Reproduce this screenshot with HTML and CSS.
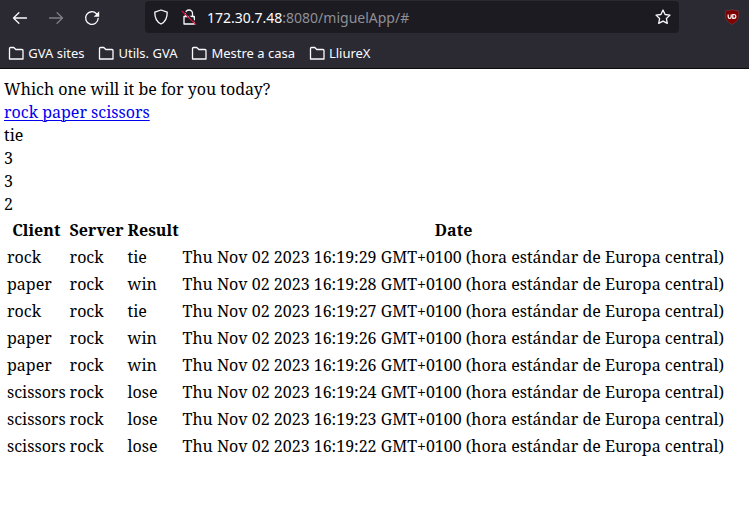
FILE: index.html
```
<!DOCTYPE html>
<html lang="en">
<head>
<meta charset="utf-8">
<title>miguelApp</title>
<link rel="stylesheet" href="styles.css">
</head>
<body>
<header class="chrome">
  <div class="toolbar">
    <nav class="nav">
      <svg class="icon" viewBox="0 0 16 16"><path d="M14.500 8H1.500M6.900 2.700 1.500 8l5.400 5.300"/></svg>
      <svg class="icon dim" viewBox="0 0 16 16"><path d="M1.500 8h13M9.100 2.700 14.500 8l-5.400 5.300"/></svg>
      <svg class="icon" viewBox="0 0 16 16"><path d="M14.200 8.300A6.300 6.300 0 1 1 12.500 3.700"/><path class="solid" d="M15.200 1.200v5.500H9.700z"/></svg>
    </nav>
    <div class="urlbar">
      <svg class="icon" viewBox="0 0 16 16"><path d="M8 1 14.200 3.200C14.300 8.500 12.800 12.600 8 15 3.200 12.600 1.700 8.500 1.800 3.200z"/></svg>
      <svg class="icon lock" viewBox="0 0 16 16"><path d="M4.500 7.500V4.500a3.500 3.500 0 0 1 7 0v3M3 7.500h10.300v7.500H3z"/><path class="gap" d="M2.300 1.400 15.700 14.400"/><path class="slash" d="M1.300 2.400 14.700 15.400"/></svg>
      <span class="url"><span class="host">172.30.7.48</span>:8080/miguelApp/#</span>
      <svg class="icon star" viewBox="0 0 16 16"><path d="m8 1 2.100 4.500 4.900.6-3.600 3.400.9 4.900L8 12.100l-4.300 2.300.9-4.900L1 6.100l4.900-.6z"/></svg>
    </div>
    <svg class="shield" viewBox="0 0 16 16"><path d="M8 .5Q11.500 2 14.700 1.800V6Q15 12 8 15.500 1 12 1.300 6V1.800Q4.500 2 8 .5z"/><path class="mark" d="M4.200 5.500v2.200q0 1.600 1.500 1.600t1.500-1.600V5.500M8.800 5.500h1.100q1.900 0 1.900 1.900t-1.900 1.900H8.800z"/></svg>
  </div>
  <nav class="bookmarks">
    <a class="bookmark"><svg class="icon" viewBox="0 0 16 16"><path d="M1.500 14V3.500q0-1 1-1h3.300l2 2H14q1 0 1 1V14z"/></svg>GVA sites</a>
    <a class="bookmark"><svg class="icon" viewBox="0 0 16 16"><path d="M1.500 14V3.500q0-1 1-1h3.300l2 2H14q1 0 1 1V14z"/></svg>Utils. GVA</a>
    <a class="bookmark"><svg class="icon" viewBox="0 0 16 16"><path d="M1.500 14V3.500q0-1 1-1h3.300l2 2H14q1 0 1 1V14z"/></svg>Mestre a casa</a>
    <a class="bookmark"><svg class="icon" viewBox="0 0 16 16"><path d="M1.500 14V3.500q0-1 1-1h3.300l2 2H14q1 0 1 1V14z"/></svg>LliureX</a>
  </nav>
</header>
<main class="page">
  <div>Which one will it be for you today?</div>
  <div><a class="choices" href="#">rock paper scissors</a></div>
  <div>tie</div>
  <div>3</div>
  <div>3</div>
  <div>2</div>
  <table class="log">
    <colgroup><col class="client"><col class="server"><col class="result"><col></colgroup>
    <tr><th>Client</th><th>Server</th><th>Result</th><th>Date</th></tr>
    <tr><td>rock</td><td>rock</td><td>tie</td><td>Thu Nov 02 2023 16:19:29 GMT+0100 (hora estándar de Europa central)</td></tr>
    <tr><td>paper</td><td>rock</td><td>win</td><td>Thu Nov 02 2023 16:19:28 GMT+0100 (hora estándar de Europa central)</td></tr>
    <tr><td>rock</td><td>rock</td><td>tie</td><td>Thu Nov 02 2023 16:19:27 GMT+0100 (hora estándar de Europa central)</td></tr>
    <tr><td>paper</td><td>rock</td><td>win</td><td>Thu Nov 02 2023 16:19:26 GMT+0100 (hora estándar de Europa central)</td></tr>
    <tr><td>paper</td><td>rock</td><td>win</td><td>Thu Nov 02 2023 16:19:26 GMT+0100 (hora estándar de Europa central)</td></tr>
    <tr><td>scissors</td><td>rock</td><td>lose</td><td>Thu Nov 02 2023 16:19:24 GMT+0100 (hora estándar de Europa central)</td></tr>
    <tr><td>scissors</td><td>rock</td><td>lose</td><td>Thu Nov 02 2023 16:19:23 GMT+0100 (hora estándar de Europa central)</td></tr>
    <tr><td>scissors</td><td>rock</td><td>lose</td><td>Thu Nov 02 2023 16:19:22 GMT+0100 (hora estándar de Europa central)</td></tr>
  </table>
</main>
</body>
</html>
```
FILE: styles.css
```
* { box-sizing: border-box; }
body { margin: 0; background: #fff; color: #000; overflow: hidden; }
.chrome {
  height: 69px;
  background: #2b2a33;
  border-bottom: 1px solid #0c0c0d;
  color: #fbfbfe;
  font-family: "Noto Sans", sans-serif;
}
.toolbar { display: flex; height: 34px; padding: 1px 9px 0 12px; }
.nav { display: flex; align-items: center; gap: 20px; width: 133px; }
.icon { width: 16px; height: 16px; flex: none; fill: none; stroke: #fbfbfe; stroke-width: 1.3; stroke-linejoin: round; stroke-linecap: round; }
.dim { opacity: .4; }
.solid { fill: #fbfbfe; stroke: none; }
.gap { stroke: #1c1b22; }
.slash { stroke: #e2123f; }
.urlbar {
  display: flex;
  align-items: center;
  width: 534px;
  height: 32px;
  padding: 0 8px;
  border-radius: 4px;
  background: #1c1b22;
}
.lock { margin-left: 12px; }
.url { margin-left: 10px; font-size: 14px; color: #8f8f96; white-space: nowrap; }
.host { color: #fbfbfe; }
.star { margin-left: auto; }
.shield { width: 16px; height: 16px; margin: 8px 0 0 auto; fill: #800000; stroke: #66444b; stroke-width: .6; }
.mark { fill: none; stroke: #fff; stroke-width: 1.2; }
.bookmarks { display: flex; align-items: center; gap: 13.6px; height: 34px; padding: 3px 0 0 8px; }
.bookmark { display: flex; align-items: center; gap: 4.3px; font-size: 13px; line-height: 18px; white-space: nowrap; }
.page { padding: 9px 4px 0; font: 16px/23px "Noto Serif", "DejaVu Serif Condensed", serif; }
.choices { color: #0000ee; text-decoration: underline; text-decoration-thickness: 1px; text-underline-offset: 2px; }
.log { table-layout: fixed; width: 723.6px; border-spacing: 2px; }
.log th, .log td { padding: 1px; white-space: nowrap; }
.client { width: 60.6px; }
.server { width: 56px; }
.result { width: 53px; }
```
